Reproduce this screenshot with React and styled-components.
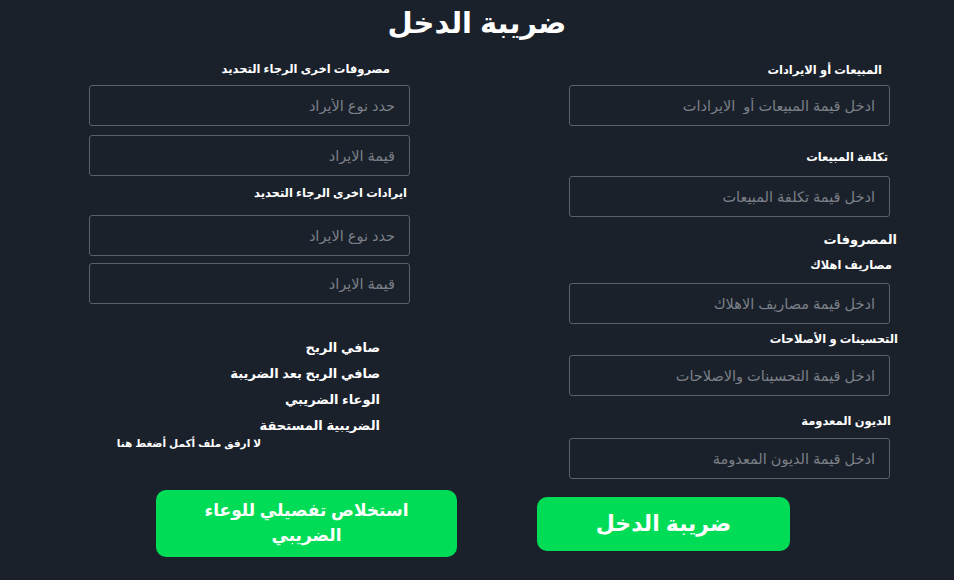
import React from "react";
import styled, { createGlobalStyle } from "styled-components";

const GlobalStyle = createGlobalStyle`
  html, body {
    margin: 0;
    padding: 0;
    background: #1a212b;
  }
  body {
    font-family: "Liberation Sans", "DejaVu Sans", sans-serif;
  }
`;

const IncomeTax = () => {
  return (
    <Page dir="rtl">
      <GlobalStyle />
      <Title>ضريبة الدخل</Title>
      <Columns>
        <Column>
          <FieldLabel $mt={4} $mr={8}>المبيعات أو الايرادات</FieldLabel>
          <Field $mt={5} placeholder="ادخل قيمة المبيعات أو  الايرادات" />
          <FieldLabel $mt={21} $mr={2}>تكلفة المبيعات</FieldLabel>
          <Field $mt={9} placeholder="ادخل قيمة تكلفة المبيعات" />
          <SectionLabel $mt={13} $mr={-7}>المصروفات</SectionLabel>
          <FieldLabel $mt={5} $mr={-2}>مصاريف اهلاك</FieldLabel>
          <Field $mt={8} placeholder="ادخل قيمة مصاريف الاهلاك" />
          <FieldLabel $mt={5} $mr={-8}>التحسينات و الأصلاحات</FieldLabel>
          <Field $mt={6} placeholder="ادخل قيمة التحسينات والاصلاحات" />
          <FieldLabel $mt={15} $mr={-1}>الديون المعدومة</FieldLabel>
          <Field $mt={7} placeholder="ادخل قيمة الديون المعدومة" />
        </Column>
        <Column>
          <FieldLabel $mt={3} $mr={20}>مصروفات اخرى الرجاء التحديد</FieldLabel>
          <Field $mt={6} placeholder="حدد نوع الأيراد" />
          <Field $mt={9} placeholder="قيمة الايراد" />
          <FieldLabel $mt={7} $mr={3}>ايرادات اخرى الرجاء التحديد</FieldLabel>
          <Field $mt={12} placeholder="حدد نوع الايراد" />
          <Field $mt={7} placeholder="قيمة الايراد" />
          <Results>
            <ResultLine>صافي الربح</ResultLine>
            <ResultLine>صافي الربح بعد الضريبة</ResultLine>
            <ResultLine>الوعاء الضريبي</ResultLine>
            <ResultLine>الضريبية المستحقة</ResultLine>
          </Results>
          <Note>لا ارفق ملف أكمل أضغط هنا</Note>
        </Column>
      </Columns>
      <ButtonRow>
        <GreenButton $w={253} $h={54} $size={22}>ضريبة الدخل</GreenButton>
        <GreenButton $w={301} $h={67} $size={17}>
          استخلاص تفصيلي للوعاء
          <br />
          الضريبي
        </GreenButton>
      </ButtonRow>
    </Page>
  );
};

const Page = styled.div`
  width: 954px;
  height: 580px;
  background: #1a212b;
  color: #ffffff;
  overflow: hidden;
`;

const Title = styled.h1`
  margin: 0;
  height: 44px;
  line-height: 46px;
  text-align: center;
  font-size: 29px;
  font-weight: 700;
`;

const Columns = styled.div`
  display: flex;
  gap: 159px;
  padding: 12px 64px 0 0;
`;

const Column = styled.div`
  width: 321px;
  display: flex;
  flex-direction: column;
`;

const FieldLabel = styled.div`
  margin-top: ${(p) => p.$mt}px;
  margin-right: ${(p) => p.$mr}px;
  height: 20px;
  line-height: 20px;
  font-size: 11.5px;
  font-weight: 700;
`;

const SectionLabel = styled(FieldLabel)`
  font-size: 13px;
`;

const Field = styled.input`
  margin-top: ${(p) => p.$mt}px;
  box-sizing: border-box;
  width: 321px;
  height: 41px;
  padding: 0 14px;
  background: transparent;
  border: 1.5px solid #5b6169;
  border-radius: 3px;
  color: #d0d0d0;
  font-family: "Liberation Sans", "DejaVu Sans", sans-serif;
  font-size: 14.5px;
  outline: none;

  &::placeholder {
    color: #7c8088;
  }
`;

const Results = styled.div`
  margin-top: 31px;
  margin-right: 30px;
  display: flex;
  flex-direction: column;
`;

const ResultLine = styled.div`
  height: 26px;
  line-height: 26px;
  font-size: 13px;
  font-weight: 700;
`;

const Note = styled.div`
  margin-top: -3px;
  margin-right: 149px;
  height: 14px;
  line-height: 14px;
  font-size: 10.5px;
  font-weight: 700;
`;

const ButtonRow = styled.div`
  display: flex;
  align-items: center;
  gap: 80px;
  height: 67px;
  margin-top: 11px;
  padding-right: 164px;
`;

const GreenButton = styled.button`
  width: ${(p) => p.$w}px;
  height: ${(p) => p.$h}px;
  border: none;
  border-radius: 10px;
  background: #00dc55;
  color: #ffffff;
  font-family: "Liberation Sans", "DejaVu Sans", sans-serif;
  font-size: ${(p) => p.$size}px;
  font-weight: 700;
  line-height: 1.45;
  cursor: pointer;
`;

export default IncomeTax;
